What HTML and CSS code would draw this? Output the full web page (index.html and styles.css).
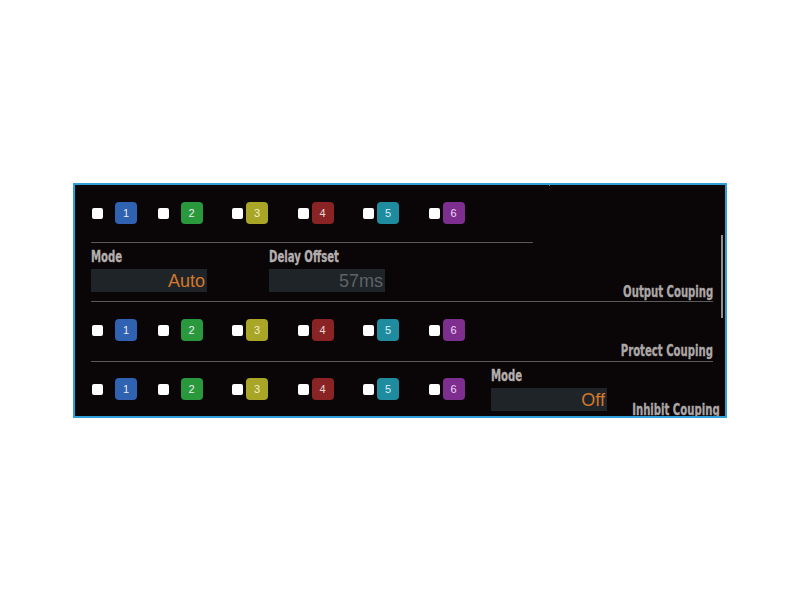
FILE: index.html
```html
<!DOCTYPE html>
<html>
<head>
<meta charset="utf-8">
<link rel="stylesheet" href="styles.css">
</head>
<body>
<div class="panel">
  <span class="tick"></span>
  <span class="scrollbar"></span>
  <div class="content">
    <div class="chans first">
      <div class="cell wide"><span class="cb"></span><span class="badge c1">1</span></div>
      <div class="cell wide"><span class="cb"></span><span class="badge c2">2</span></div>
      <div class="cell"><span class="cb"></span><span class="badge c3">3</span></div>
      <div class="cell"><span class="cb"></span><span class="badge c4">4</span></div>
      <div class="cell"><span class="cb"></span><span class="badge c5">5</span></div>
      <div class="cell"><span class="cb"></span><span class="badge c6">6</span></div>
    </div>
    <div class="rule short"></div>
    <div class="fieldrow">
      <div class="field">
        <div class="label"><span class="cond">Mode</span></div>
        <div class="input orange">Auto</div>
      </div>
      <div class="field second">
        <div class="label"><span class="cond">Delay Offset</span></div>
        <div class="input gray">57ms</div>
      </div>
      <div class="title"><span class="cond r">Output Couping</span></div>
    </div>
    <div class="rule"></div>
    <div class="chans">
      <div class="cell wide"><span class="cb"></span><span class="badge c1">1</span></div>
      <div class="cell wide"><span class="cb"></span><span class="badge c2">2</span></div>
      <div class="cell"><span class="cb"></span><span class="badge c3">3</span></div>
      <div class="cell"><span class="cb"></span><span class="badge c4">4</span></div>
      <div class="cell"><span class="cb"></span><span class="badge c5">5</span></div>
      <div class="cell"><span class="cb"></span><span class="badge c6">6</span></div>
    </div>
    <div class="title solo"><span class="cond r">Protect Couping</span></div>
    <div class="rule"></div>
    <div class="lastrow">
      <div class="chans inrow">
        <div class="cell wide"><span class="cb"></span><span class="badge c1">1</span></div>
        <div class="cell wide"><span class="cb"></span><span class="badge c2">2</span></div>
        <div class="cell"><span class="cb"></span><span class="badge c3">3</span></div>
        <div class="cell"><span class="cb"></span><span class="badge c4">4</span></div>
        <div class="cell"><span class="cb"></span><span class="badge c5">5</span></div>
        <div class="cell"><span class="cb"></span><span class="badge c6">6</span></div>
      </div>
      <div class="field third">
        <div class="label"><span class="cond">Mode</span></div>
        <div class="input orange">Off</div>
      </div>
      <div class="title last"><span class="cond r">Inhibit Couping</span></div>
    </div>
  </div>
</div>
</body>
</html>
```
FILE: styles.css
```css
html, body {
  margin: 0;
  padding: 0;
  background: #ffffff;
}
body {
  font-family: "Liberation Sans", Arial, sans-serif;
}
.panel {
  position: relative;
  margin: 183px 0 0 73px;
  width: 650px;
  height: 231px;
  border: 2px solid #2e9fd9;
  background: #0a0506;
  overflow: hidden;
}
.tick {
  position: absolute;
  left: 474px;
  top: 0;
  width: 1px;
  height: 1px;
  background: #777;
}
.scrollbar {
  position: absolute;
  left: 646px;
  top: 50px;
  width: 2px;
  height: 83px;
  background: #8e8e8e;
}
.content {
  padding-left: 16px;
  width: 622px;
}
.chans {
  display: flex;
  height: 22px;
  align-items: center;
  margin-top: 17px;
  padding-left: 1px;
}
.cell {
  width: 65.5px;
  flex: none;
  display: flex;
  align-items: center;
  padding-left: 9px;
  box-sizing: border-box;
}
.cell.wide {
  padding-left: 0;
}
.cb {
  width: 11px;
  height: 11px;
  background: #ffffff;
  border-radius: 2px;
  margin-right: 3px;
}
.cell.wide .cb {
  margin-right: 12px;
}
.badge {
  width: 22px;
  height: 22px;
  border-radius: 4px;
  display: flex;
  align-items: center;
  justify-content: center;
  font-size: 11px;
  color: #eceaf2;
}
.c1 { background: #2f62b0; }
.c2 { background: #2a983c; }
.c3 { background: #a9a526; color: #f2efc8; }
.c4 { background: #8a2324; color: #f1d6d6; }
.c5 { background: #1f8b9f; color: #d8f1f5; }
.c6 { background: #7e2e8f; color: #efd8f3; }
.rule {
  height: 1px;
  background: #5e5959;
}
.rule.short {
  width: 442px;
  margin-top: 18px;
}
.fieldrow {
  display: flex;
  align-items: flex-end;
}
.field {
  width: 116px;
  flex: none;
  margin-bottom: 9px;
}
.field.second {
  margin-left: 62px;
}
.cond {
  display: inline-block;
  font-family: "DejaVu Sans Condensed", "DejaVu Sans", sans-serif;
  font-weight: bold;
  font-size: 15px;
  transform: scaleX(0.75);
  transform-origin: left center;
  white-space: nowrap;
  -webkit-text-stroke: 0.3px currentColor;
}
.cond.r {
  transform-origin: right center;
}
.label {
  line-height: 20px;
  height: 20px;
  color: #b4afaf;
  margin-top: 4px;
  margin-bottom: 2px;
}
.input {
  height: 23px;
  background: #1e2428;
  font-size: 18px;
  line-height: 24px;
  text-align: right;
  padding-right: 2px;
  box-sizing: border-box;
}
.orange { color: #d3772b; }
.gray { color: #5e6367; }
.title {
  margin-left: auto;
  line-height: 18px;
  color: #aca7a7;
  white-space: nowrap;
}
.title.solo {
  text-align: right;
  line-height: 19px;
}
.lastrow {
  display: flex;
  align-items: flex-start;
}
.chans.inrow {
  margin-top: 16px;
  flex: none;
}
.field.third {
  margin-left: 6px;
  margin-bottom: 0;
}
.field.third .label {
  margin-top: 4px;
}
.title.last {
  flex: 1 1 0;
  min-width: 0;
  display: flex;
  justify-content: flex-end;
  margin-top: 39px;
  margin-right: -7px;
}
```
